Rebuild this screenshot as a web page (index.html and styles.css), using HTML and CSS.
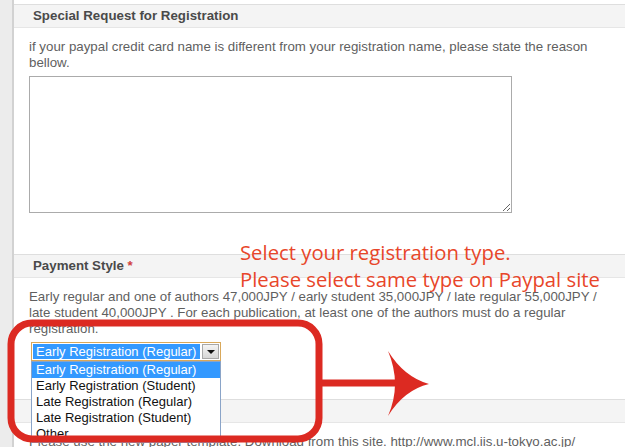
FILE: index.html
```html
<!DOCTYPE html>
<html lang="en">
<head>
    <meta charset="UTF-8">
    <title>Registration - Payment</title>
    <link rel="stylesheet" href="styles.css">
</head>
<body>
    <div class="page">
        <div class="side-strip"></div>

        <div class="form-column">
            <section class="field">
                <h2 class="field-title">Special Request for Registration</h2>
                <div class="field-body">
                    <p class="field-desc">if your paypal credit card name is different from your registration name, please state the reason bellow.</p>
                    <textarea class="field-textarea"></textarea>
                </div>
            </section>

            <section class="field field-payment">
                <h2 class="field-title">Payment Style <span class="required">*</span></h2>
                <div class="field-body">
                    <p class="field-desc">Early regular and one of authors 47,000JPY / early student 35,000JPY / late regular 55,000JPY / late student 40,000JPY . For each publication, at least one of the authors must do a regular registration.</p>

                    <div class="dropdown">
                        <div class="dropdown-box">
                            <span class="dropdown-value">Early Registration (Regular)</span>
                            <span class="dropdown-btn"><span class="dropdown-caret"></span></span>
                        </div>
                        <ul class="dropdown-list">
                            <li class="active">Early Registration (Regular)</li>
                            <li>Early Registration (Student)</li>
                            <li>Late Registration (Regular)</li>
                            <li>Late Registration (Student)</li>
                            <li>Other</li>
                        </ul>
                    </div>
                </div>
            </section>

            <section class="field">
                <h2 class="field-title">Paper File</h2>
                <div class="field-body">
                    <p class="field-desc">Please use the new paper template. Download from this site. http://www.mcl.iis.u-tokyo.ac.jp/</p>
                </div>
            </section>
        </div>

        <!-- hand-drawn note on top of the screenshot -->
        <div class="note-text">
            Select your registration type.<br>
            Please select same type on Paypal site
        </div>
        <svg class="note-marks" width="625" height="447" viewBox="0 0 625 447">
            <rect x="11" y="323" width="308" height="116" rx="21" ry="21" fill="none" stroke="#dc2a22" stroke-width="7"/>
            <path d="M319 383 H398" stroke="#dc2a22" stroke-width="7" fill="none"/>
            <path d="M388 351 Q404 377 429 384 Q404 390 388 416 Q402 384 388 351 Z" fill="#dc2a22"/>
        </svg>
    </div>
</body>
</html>
```

FILE: styles.css
```css
* {
    margin: 0;
    padding: 0;
    box-sizing: border-box;
}

body {
    font-family: 'Liberation Sans', Arial, sans-serif;
    background: #ffffff;
    color: #5f5f5f;
}

.page {
    position: relative;
    display: flex;
    width: 625px;
    height: 447px;
    overflow: hidden;
}

.side-strip {
    width: 14px;
    flex-shrink: 0;
    background: #ececec;
    border-right: 2px solid #d2d2d2;
}

.form-column {
    flex: 1;
    padding-top: 4px;
}

.field-title {
    height: 24px;
    padding: 0 19px;
    background: #f4f4f4;
    border-top: 1px solid #dedede;
    border-bottom: 1px solid #e6e6e6;
    font-size: 13.3px;
    font-weight: bold;
    line-height: 22px;
    color: #4a4a4a;
}

.required {
    color: #d04040;
}

.field-body {
    padding: 11px 0 0 15px;
}

.field-desc {
    width: 570px;
    font-size: 13.3px;
    line-height: 16px;
}

.field-textarea {
    display: block;
    width: 483px;
    height: 137px;
    margin: 5px 0 41px 0;
    border: 1px solid #ababab;
    resize: both;
}

.field-payment .field-body {
    padding-bottom: 38px;
}

/* dropdown, shown in its open state */
.dropdown {
    position: relative;
    width: 190px;
    margin: 5px 0 0 2px;
    font-size: 13px;
}

.dropdown-box {
    display: flex;
    align-items: center;
    height: 19px;
    border: 1px solid #d9a85a;
    padding: 1px;
}

.dropdown-value {
    flex: 1;
    height: 15px;
    line-height: 15px;
    padding-left: 3px;
    background: #3399ff;
    color: #ffffff;
    white-space: nowrap;
    overflow: hidden;
}

.dropdown-btn {
    display: flex;
    align-items: center;
    justify-content: center;
    width: 17px;
    height: 15px;
    margin-left: 2px;
    background: linear-gradient(#f4f4f4, #d6d6d6);
    border: 1px solid #a8a8a8;
}

.dropdown-caret {
    width: 0;
    height: 0;
    border-left: 4px solid transparent;
    border-right: 4px solid transparent;
    border-top: 4px solid #111111;
}

.dropdown-list {
    position: absolute;
    top: 19px;
    left: 0;
    width: 190px;
    list-style: none;
    background: #ffffff;
    border: 1px solid #8aa4c8;
    color: #111111;
}

.dropdown-list li {
    height: 16px;
    line-height: 16px;
    padding-left: 4px;
    white-space: nowrap;
}

.dropdown-list li.active {
    background: #3399ff;
    color: #ffffff;
}

.note-text {
    position: absolute;
    left: 240px;
    top: 239px;
    font-family: 'Open Sans', sans-serif;
    font-size: 20.3px;
    line-height: 27px;
    color: #e8462a;
}

.note-marks {
    position: absolute;
    left: 0;
    top: 0;
    pointer-events: none;
}
```
